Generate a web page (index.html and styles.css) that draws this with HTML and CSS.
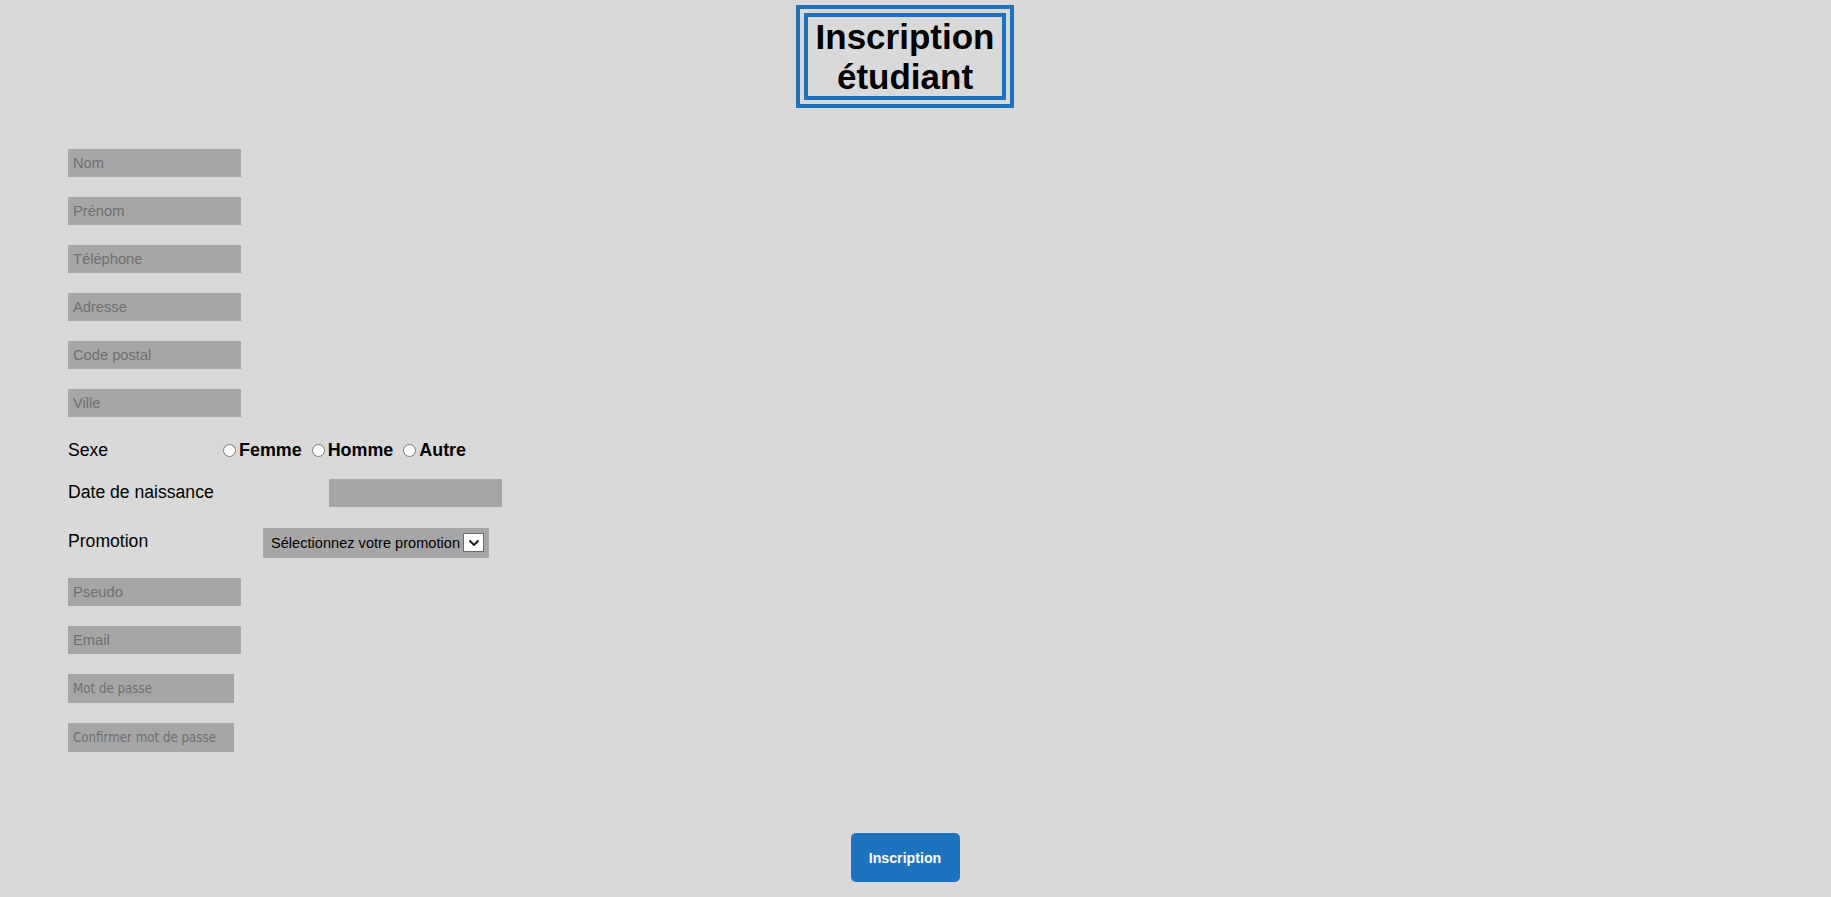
FILE: index.html
```html
<!DOCTYPE html>
<html lang="fr">
<head>
<meta charset="utf-8">
<title>Inscription étudiant</title>
<link rel="stylesheet" href="styles.css">
</head>
<body>
<div class="page">
  <header class="header">
    <h1 class="title">Inscription<br>étudiant</h1>
  </header>
  <form class="form">
    <div class="fields">
      <input class="field" type="text" placeholder="Nom">
      <input class="field" type="text" placeholder="Prénom">
      <input class="field" type="text" placeholder="Téléphone">
      <input class="field" type="text" placeholder="Adresse">
      <input class="field" type="text" placeholder="Code postal">
      <input class="field" type="text" placeholder="Ville">
      <div class="row row-sexe">
        <span class="label label-sexe">Sexe</span>
        <label class="choice"><input class="radio" type="radio" name="sexe">Femme</label>
        <label class="choice"><input class="radio" type="radio" name="sexe">Homme</label>
        <label class="choice"><input class="radio" type="radio" name="sexe">Autre</label>
      </div>
      <div class="row row-date">
        <span class="label label-date">Date de naissance</span>
        <input class="field" type="text">
      </div>
      <div class="row row-promo">
        <span class="label label-promo">Promotion</span>
        <span class="select-wrap">
          <select class="select">
            <option>Sélectionnez votre promotion</option>
          </select>
          <span class="select-arrow">
            <svg width="12" height="8" viewBox="0 0 12 8"><path d="M1.5 1.5 L6 6 L10.5 1.5" fill="none" stroke="#111" stroke-width="1.8"/></svg>
          </span>
        </span>
      </div>
      <input class="field" type="text" placeholder="Pseudo">
      <input class="field" type="text" placeholder="Email">
      <input class="field pass" type="password" placeholder="Mot de passe">
      <input class="field pass" type="password" placeholder="Confirmer mot de passe">
    </div>
    <div class="actions">
      <button class="submit" type="button">Inscription</button>
    </div>
  </form>
</div>
</body>
</html>
```
FILE: styles.css
```css
html, body {
  margin: 0;
  padding: 0;
  background: #d9d9d9;
}
body {
  font-family: "Liberation Sans", Arial, sans-serif;
  color: #000;
}
.page {
  width: 1810px;
  min-height: 897px;
}
.header {
  display: flex;
  justify-content: center;
  padding-top: 5px;
}
.title {
  margin: 0;
  border: 12px double #1e73be;
  padding: 0 8px;
  font-size: 35px;
  line-height: 39.5px;
  font-weight: bold;
  text-align: center;
}
.form {
  margin: 0;
  padding: 41px 0 0 68px;
}
.fields {
  display: flex;
  flex-direction: column;
  align-items: flex-start;
  gap: 20px;
}
.field {
  box-sizing: border-box;
  width: 173px;
  height: 28px;
  margin: 0;
  padding: 0 5px;
  border: none;
  outline: none;
  background: #a6a6a6;
  font-family: "Liberation Sans", Arial, sans-serif;
  font-size: 14.7px;
  color: #333;
}
.field::placeholder {
  color: #6e6e6e;
}
.field.pass {
  width: 166px;
  height: 29px;
  font-family: "DejaVu Sans Condensed", "DejaVu Sans", sans-serif;
  font-size: 13.2px;
}
.row {
  display: flex;
  align-items: center;
  margin-top: 1px;
}
.label {
  font-size: 17.6px;
  flex: none;
}
.label-sexe { width: 155px; }
.label-date { width: 261px; margin-bottom: 2px; }
.label-promo { width: 195px; margin-bottom: 4px; }
.row-sexe {
  height: 20px;
  padding-top: 2px;
  margin-bottom: -2px;
}
.choice {
  display: flex;
  align-items: center;
  font-size: 17.9px;
  font-weight: bold;
  margin-right: 5px;
}
.radio {
  width: 13px;
  height: 13px;
  margin: 0 3px 0 0;
}
.choice + .choice .radio { margin-left: 5px; }
.select-wrap {
  position: relative;
  display: inline-block;
}
.select {
  appearance: none;
  -webkit-appearance: none;
  box-sizing: border-box;
  width: 226px;
  height: 30px;
  margin: 0;
  padding: 0 28px 0 8px;
  border: none;
  outline: none;
  background: #a6a6a6;
  font-family: "Liberation Sans", Arial, sans-serif;
  font-size: 14.6px;
  color: #000;
}
.select-arrow {
  position: absolute;
  top: 5px;
  right: 5px;
  box-sizing: border-box;
  width: 21px;
  height: 19px;
  border: 1px solid #6b6b6b;
  background: #fff;
  display: flex;
  align-items: center;
  justify-content: center;
  pointer-events: none;
}
.actions {
  display: flex;
  justify-content: center;
  margin-left: -68px;
  padding-top: 81px;
}
.submit {
  width: 109px;
  height: 49px;
  border: none;
  border-radius: 5px;
  background: #1e73be;
  color: #fff;
  font-family: "Liberation Sans", Arial, sans-serif;
  font-size: 14.2px;
  font-weight: bold;
  cursor: pointer;
}
```
